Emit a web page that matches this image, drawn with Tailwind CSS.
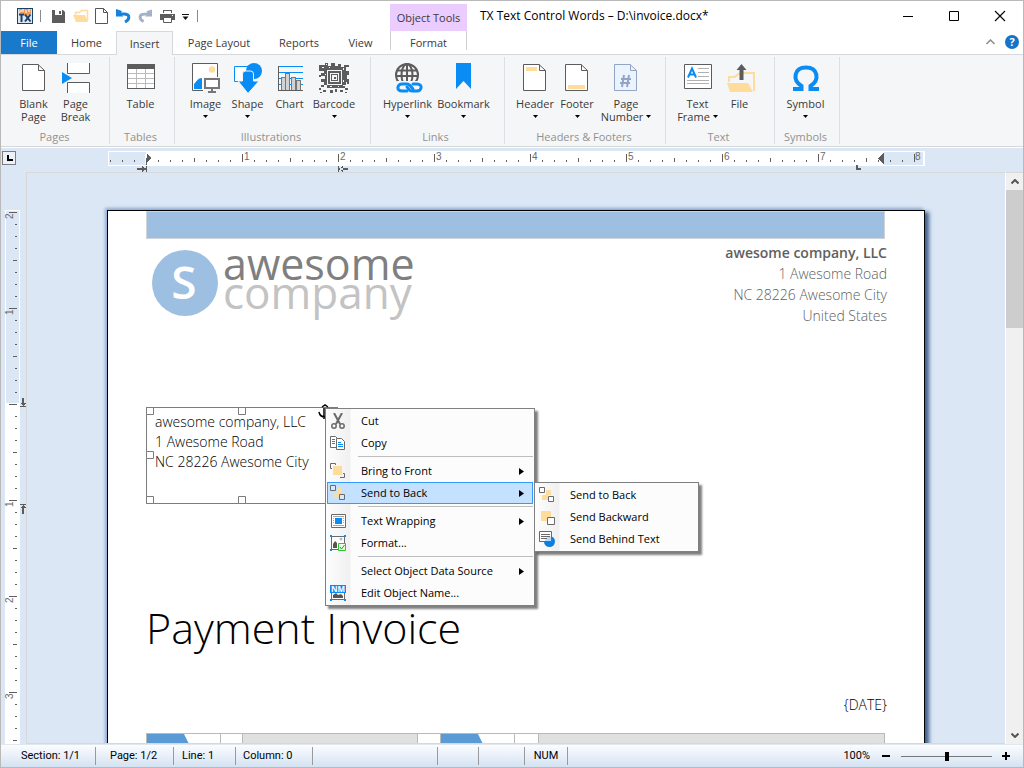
<!DOCTYPE html>
<html lang="en">
<head>
    <meta charset="UTF-8">
    <meta name="viewport" content="width=device-width, initial-scale=1.0">
    <title>TX Text Control Words</title>
    <script src="https://cdn.jsdelivr.net/npm/@tailwindcss/browser@4"></script>
</head>
<body class="h-screen flex flex-col overflow-hidden border border-[#b9b9b9] bg-white font-['Open_Sans',sans-serif] text-[11px] leading-[13px] text-[#3a3a3a]">

<!-- Title bar -->
<header class="flex h-[30px] shrink-0">
    <div class="flex w-[389px] items-center pl-4">
        <svg class="h-4 w-4" viewBox="0 0 16 16">
            <rect width="16" height="16" fill="#17406f"/>
            <rect x="1" y="1" width="14" height="14" fill="#dfe6ee"/>
            <path d="M2 1h12v5l-3 1-1 2-2-1-2-3H3z" fill="#ee9a57"/>
            <path d="M4 2v2M6 1v3M9 2v3M12 1v3" stroke="#fff"/>
            <path d="M2 6.5h5M4.500 6v8M8 6.500l5.500 7M13.500 6.500l-5.500 7" stroke="#17406f" stroke-width="2" fill="none"/>
        </svg>
        <span class="ml-[7px] h-3 w-px bg-[#8a8a8a]"></span>
        <button class="ml-[11px]" aria-label="Save">
            <svg class="h-[13px] w-[13px]" viewBox="0 0 13 13"><path d="M0 0h11l2 2v11H0z" fill="#5c5c5c"/><path d="M3 0h7v5H3z" fill="#fff"/><path d="M7 1h2v3H7zM3 9h7v1H3z" fill="#5c5c5c"/></svg>
        </button>
        <button class="ml-2" aria-label="Open">
            <svg class="h-[14px] w-4" viewBox="0 0 16 14"><path d="M2.500 6V3.500h4l2-2h6v10" fill="none" stroke="#ffdc9b" stroke-width="1.500"/><path d="M0 6h12l3 7H3z" fill="#ffdc9b"/></svg>
        </button>
        <button class="ml-[6px]" aria-label="New">
            <svg class="h-4 w-[13px]" viewBox="0 0 13 16"><path d="M.5.5h8l4 4v11H.5z" fill="#fff" stroke="#555"/><path d="M8.500.5v4h4" fill="none" stroke="#555"/></svg>
        </button>
        <button class="ml-2" aria-label="Undo">
            <svg class="h-[14px] w-[15px]" viewBox="0 0 15 14"><path d="M2 5h6c6.500 0 6 5.500 1 8" fill="none" stroke="#1583dc" stroke-width="3"/><path d="M0 0v7.500h7.500L4.500 4.500 6 2z" fill="#1583dc"/></svg>
        </button>
        <button class="ml-[7px]" aria-label="Redo">
            <svg class="h-[14px] w-[14px]" viewBox="0 0 15 14"><path d="M13 5H7C.5 5 1 10.500 6 13" fill="none" stroke="#a3b2ca" stroke-width="3"/><path d="M15 0v7.500H7.500l3-3L9 2z" fill="#a3b2ca"/></svg>
        </button>
        <button class="ml-2" aria-label="Print">
            <svg class="h-[13px] w-[15px]" viewBox="0 0 15 13"><path d="M3 0h9v3H3zM0 4h15v6h-3V8H3v2H0z" fill="#5c5c5c"/><path d="M3.500 8.500h8v4h-8zM4 1h7v2H4z" fill="#fff"/><path d="M3.500 7.500h8v5h-8z" fill="none" stroke="#5c5c5c"/><path d="M12 5h1v1h-1z" fill="#fff"/></svg>
        </button>
        <button class="ml-[7px]" aria-label="Customize quick access toolbar">
            <svg class="mt-px h-[6px] w-[7px]" viewBox="0 0 7 6"><path d="M0 0h7v1H0zM.5 2.500h6l-3 3.500z" fill="#111"/></svg>
        </button>
        <span class="ml-2 h-3 w-px bg-[#8a8a8a]"></span>
    </div>
    <div class="mt-[3px] flex w-[77px] items-center justify-center bg-[#eaccff]">Object Tools</div>
    <h1 class="ml-[13px] flex-1 pt-2 text-[12px] leading-[14px] text-black">TX Text Control Words – D:\invoice.docx*</h1>
    <div class="flex items-center gap-[34px] pr-[17px] pb-px">
        <button aria-label="Minimize"><svg class="h-3 w-3" viewBox="0 0 12 12"><path d="M1 6h10v1H1z"/></svg></button>
        <button aria-label="Maximize"><svg class="h-3 w-3" viewBox="0 0 12 12"><path d="M1.500 1.500h9v9h-9z" fill="none" stroke="#000"/></svg></button>
        <button aria-label="Close"><svg class="h-3 w-3" viewBox="0 0 12 12"><path d="M1 1l10 10M11 1L1 11" stroke="#000" stroke-width="1.100"/></svg></button>
    </div>
</header>

<!-- Ribbon tabs -->
<nav class="flex h-6 shrink-0 items-stretch border-b border-[#d6d8da]">
    <button class="w-14 bg-[#1979ca] text-white">File</button>
    <button class="w-[59px]">Home</button>
    <button class="-mb-px w-[57px] border border-b-0 border-[#d6d8da] bg-[#f5f6f7]">Insert</button>
    <button class="w-[92px]">Page Layout</button>
    <button class="w-[68px]">Reports</button>
    <button class="mr-[2px] w-[55px]">View</button>
    <button class="mb-1 w-[77px] border-x border-[#d0d0d0] pt-1">Format</button>
    <div class="ml-auto flex items-center gap-[10px] pr-1 pb-px">
        <button aria-label="Collapse ribbon"><svg class="h-[6px] w-[9px]" viewBox="0 0 9 6"><path d="M.5 5l4-4 4 4" fill="none" stroke="#8b8b8b" stroke-width="1.500"/></svg></button>
        <button aria-label="Help" class="h-[14px] w-[14px] rounded-full bg-[#1474c9] text-center text-[11px] leading-[14px] font-bold text-white">?</button>
    </div>
</nav>

<!-- Ribbon -->
<div class="flex h-[92px] shrink-0 border-b border-[#d6d8da] bg-[#f5f6f7] py-[2px]">
    <section class="flex w-[109px] flex-col justify-between border-r border-[#dcdfe1] pt-[5px] pr-px pb-[1px] text-center">
        <div class="flex justify-center">
            <button class="flex w-[42px] flex-col items-center">
                <svg class="mb-[3px] h-8 w-8" viewBox="0 0 32 32"><path d="M4.500 2.500H20l6.500 6v20h-22z" fill="#fff" stroke="#5c5c5c"/><path d="M20.500 2.500v6h6" fill="none" stroke="#5c5c5c"/></svg>
                Blank<br>Page
            </button>
            <button class="flex w-[42px] flex-col items-center">
                <svg class="mb-[3px] h-8 w-8" viewBox="0 0 32 32"><path d="M7.500 1v10.500h22V1M7.500 31V20.500h22V31" fill="#fff" stroke="#5c5c5c"/><path d="M2 10v12l10-6z" fill="#0a8cf5"/></svg>
                Page<br>Break
            </button>
        </div>
        <h2 class="text-[#929292]">Pages</h2>
    </section>
    <section class="flex w-[65px] flex-col justify-between border-r border-[#dcdfe1] pt-[5px] pr-[3px] pb-[1px] text-center">
        <div class="flex justify-center">
            <button class="flex w-[42px] flex-col items-center">
                <svg class="mb-[3px] h-8 w-8" viewBox="0 0 32 32" shape-rendering="crispEdges"><path d="M2.500 2.500h27v24h-27z" fill="#fff"/><path d="M3 11.500h26M3 16.500h26M3 21.500h26M11.500 7v19M20.500 7v19" stroke="#bbb" fill="none"/><path d="M2.500 2.500h27v24h-27z" fill="none" stroke="#5c5c5c"/><path d="M2 2h28v5H2z" fill="#5c5c5c"/></svg>
                Table
            </button>
        </div>
        <h2 class="text-[#929292]">Tables</h2>
    </section>
    <section class="flex w-[196px] flex-col justify-between border-r border-[#dcdfe1] pt-[5px] pr-[3px] pb-[1px] text-center">
        <div class="flex justify-center">
            <button class="flex w-[42px] flex-col items-center">
                <svg class="mb-[3px] h-8 w-8" viewBox="0 0 32 32"><path d="M2.500 1.500h25v27h-25z" fill="#fff" stroke="#5c5c5c"/><circle cx="22" cy="7.500" r="3.200" fill="#ffdc9b"/><path d="M4 27v-5c3-3 4-6 8-6v11z" fill="#0a8cf5"/><path d="M13 15h18v16H13z" fill="#f5f6f7"/><path d="M15 17h14v9H15z" fill="#fff" stroke="#777" stroke-width="2"/><path d="M21 27h2v2h3v2h-8v-2h3z" fill="#777"/></svg>
                Image
                <svg class="mt-[5px] h-[3px] w-[5px]" viewBox="0 0 5 3"><path d="M0 0h5L2.500 3z"/></svg>
            </button>
            <button class="flex w-[42px] flex-col items-center">
                <svg class="mb-[3px] h-8 w-8" viewBox="0 0 32 32"><path d="M2.500 4.500h15v15h-15z" fill="#fff" stroke="#0a8cf5"/><circle cx="22" cy="9" r="8" fill="#0a8cf5"/><path d="M10.500 12q0-3 3-3h5q3 0 3 3v7h5.500L16 31.500 6 19h4.500z" fill="#0a8cf5" stroke="#f5f6f7"/></svg>
                Shape
                <svg class="mt-[5px] h-[3px] w-[5px]" viewBox="0 0 5 3"><path d="M0 0h5L2.500 3z"/></svg>
            </button>
            <button class="flex w-[42px] flex-col items-center">
                <svg class="mb-[3px] h-8 w-8" viewBox="0 0 32 32" shape-rendering="crispEdges"><path d="M4.500 4.500H29M4.500 10.500H29M4.500 16.500H29M4.500 22.500H29" stroke="#0a8cf5" fill="none"/><path d="M7.500 15.500h4v13h-4zM11.500 11.500h4v17h-4zM17.500 15.500h4v13h-4zM22.500 18.500h4v10h-4z" fill="#d2d2d2" stroke="#777"/><path d="M4.500 4v24.500H29" fill="none" stroke="#5c5c5c"/></svg>
                Chart
                <svg class="mt-[5px] h-[3px] w-[5px]" viewBox="0 0 5 3"></svg>
            </button>
            <button class="flex w-[47px] flex-col items-center">
                <svg class="mb-[3px] h-8 w-8" viewBox="0 0 32 32" shape-rendering="crispEdges"><g fill="#5c5c5c"><path d="M1 3h6V1h3v3h3V1h4v3h3V2h3v3h3V3h5v2h-3v4h3v4h-2v4h2v3h-3v3h-3v3H9v-3H6v-3H3v-3h4v-3H3v-3h3V9H1z"/><path d="M1 13h2v2H1zM3 23h3v2H3zM1 26h2v2H1zM5 28h3v2H5zM12 28h3v3h-3zM17 27h2v3h-2zM22 28h3v2h-3zM27 26h3v2h-3zM24 24h3v2h-3zM29 10h2v2h-2zM29 20h2v2h-2zM2 30h2v1H2zM27 30h2v1h-2z"/></g><path d="M9.500 8.500h14v14h-14zM12.500 11.500h8v8h-8z" fill="none" stroke="#f5f6f7"/><path d="M14 13h5v5h-5z" fill="#f5f6f7"/><path d="M15.500 14.500h2v2h-2z" fill="#5c5c5c"/><path d="M8 2h1v1H8zM4 5h2v1H4zM11 5h1v1h-1zM25 6h1v2h-1zM7 12h1v1H7zM25 18h1v2h-1zM12 24h2v1h-2zM20 24h1v1h-1z" fill="#f5f6f7"/></svg>
                Barcode
                <svg class="mt-[5px] h-[3px] w-[5px]" viewBox="0 0 5 3"><path d="M0 0h5L2.500 3z"/></svg>
            </button>
        </div>
        <h2 class="text-[#929292]">Illustrations</h2>
    </section>
    <section class="flex w-[134px] flex-col justify-between border-r border-[#dcdfe1] pt-[5px] pr-1 pb-[1px] text-center">
        <div class="flex justify-center">
            <button class="flex w-14 flex-col items-center">
                <svg class="mb-[3px] h-8 w-8" viewBox="0 0 32 32"><g fill="none" stroke="#5c5c5c" stroke-width="2"><circle cx="15" cy="13" r="11"/><ellipse cx="15" cy="13" rx="5.500" ry="11"/><path d="M15 2v22M5 8.500h20M4 14h22"/></g><path d="M5 19h26v13H5z" fill="#f5f6f7"/><g fill="none" stroke="#0a8cf5" stroke-width="3" stroke-linecap="round"><path d="M15 29h-5c-6 0-5-7 0-7h5c3 0 4 3 6 5"/><path d="M21 22h4c6 0 5 7 0 7h-5c-3 0-3-2-5-4"/></g></svg>
                Hyperlink
                <svg class="mt-[5px] h-[3px] w-[5px]" viewBox="0 0 5 3"><path d="M0 0h5L2.500 3z"/></svg>
            </button>
            <button class="flex w-14 flex-col items-center">
                <svg class="mb-[3px] h-8 w-8" viewBox="0 0 32 32"><path d="M8 1h15v26l-7.500-8L8 27z" fill="#0a8cf5"/></svg>
                Bookmark
                <svg class="mt-[5px] h-[3px] w-[5px]" viewBox="0 0 5 3"><path d="M0 0h5L2.500 3z"/></svg>
            </button>
        </div>
        <h2 class="text-[#929292]">Links</h2>
    </section>
    <section class="flex w-[161px] flex-col justify-between border-r border-[#dcdfe1] pt-[5px] pr-[2px] pb-[1px] text-center">
        <div class="flex justify-center">
            <button class="flex w-[42px] flex-col items-center">
                <svg class="mb-[3px] h-8 w-8" viewBox="0 0 32 32"><path d="M4.500 2.500H20l6.500 6v20h-22z" fill="#fff" stroke="#5c5c5c"/><path d="M20.500 2.500v6h6" fill="none" stroke="#5c5c5c"/><path d="M7 5h11v4H7z" fill="#ffdc9b"/></svg>
                Header
                <svg class="mt-[5px] h-[3px] w-[5px]" viewBox="0 0 5 3"><path d="M0 0h5L2.500 3z"/></svg>
            </button>
            <button class="flex w-[42px] flex-col items-center">
                <svg class="mb-[3px] h-8 w-8" viewBox="0 0 32 32"><path d="M4.500 2.500H20l6.500 6v20h-22z" fill="#fff" stroke="#5c5c5c"/><path d="M20.500 2.500v6h6" fill="none" stroke="#5c5c5c"/><path d="M7 23h17v4H7z" fill="#ffdc9b"/></svg>
                Footer
                <svg class="mt-[5px] h-[3px] w-[5px]" viewBox="0 0 5 3"><path d="M0 0h5L2.500 3z"/></svg>
            </button>
            <button class="flex w-[56px] flex-col items-center">
                <svg class="mb-[3px] h-8 w-8" viewBox="0 0 32 32"><path d="M4.500 2.500H20l6.500 6v20h-22z" fill="#ebf3ff" stroke="#93a5c4"/><path d="M20.500 2.500v6h6" fill="none" stroke="#93a5c4"/><path d="M14 13l-2 12M19 13l-2 12M11 17h10M10 21h10" stroke="#93a5c4" stroke-width="2"/></svg>
                Page
                <span class="flex items-center gap-[3px]">Number <svg class="h-[3px] w-[5px]" viewBox="0 0 5 3"><path d="M0 0h5L2.500 3z"/></svg></span>
            </button>
        </div>
        <h2 class="text-[#929292]">Headers &amp; Footers</h2>
    </section>
    <section class="flex w-[109px] flex-col justify-between border-r border-[#dcdfe1] pt-[5px] pr-[3px] pb-[1px] text-center">
        <div class="flex justify-center">
            <button class="flex w-[42px] flex-col items-center">
                <svg class="mb-[3px] h-8 w-8" viewBox="0 0 32 32"><path d="M2.500 2.500h27v24h-27z" fill="#fff" stroke="#5c5c5c"/><path d="M16 6.500h11M16 10.500h11M16 14.500h11M5 18.500h22M5 21.500h22" stroke="#b0b0b0"/><path d="M6 15.500l4-9 4 9M7.500 12.500h5" fill="none" stroke="#0a8cf5" stroke-width="2"/></svg>
                Text
                <span class="flex items-center gap-[3px]">Frame <svg class="h-[3px] w-[5px]" viewBox="0 0 5 3"><path d="M0 0h5L2.500 3z"/></svg></span>
            </button>
            <button class="flex w-[42px] flex-col items-center">
                <svg class="mb-[3px] h-8 w-8" viewBox="0 0 32 32"><path d="M5 20v-5h6l3-3 3-1h13v18" fill="none" stroke="#ffdc9b" stroke-width="2"/><path d="M3 21h21l5 9H6z" fill="#ffdc9b"/><path d="M17.500 2l-5 6h3v10h4V8h3z" fill="#5c5c5c"/></svg>
                File
            </button>
        </div>
        <h2 class="text-[#929292]">Text</h2>
    </section>
    <section class="flex w-[65px] flex-col justify-between border-r border-[#dcdfe1] pt-[5px] pr-[3px] pb-[1px] text-center">
        <div class="flex justify-center">
            <button class="flex w-[42px] flex-col items-center">
                <svg class="mb-[3px] h-8 w-8" viewBox="0 0 32 32"><path d="M4 27h7.500V24C2 18 4 5.500 16 5.500s14 12.500 4.500 18.500v3H28" fill="none" stroke="#0a8cf5" stroke-width="4"/><path d="M3 25h1v4H3zM28 25h1v4h-1z" fill="#0a8cf5"/></svg>
                Symbol
                <svg class="mt-[5px] h-[3px] w-[5px]" viewBox="0 0 5 3"><path d="M0 0h5L2.500 3z"/></svg>
            </button>
        </div>
        <h2 class="text-[#929292]">Symbols</h2>
    </section>
</div>

<!-- Horizontal ruler -->
<div class="flex h-[25px] shrink-0 items-start border-t border-white bg-[#dbe7f5] pr-[98px]">
    <button aria-label="Tab type" class="mt-[3px] ml-px h-[14px] w-[14px] border border-[#7d7d7d] bg-[#edf2fa]">
        <svg class="h-3 w-3" viewBox="0 0 12 12"><path d="M4 3h2v4h4v2H4z"/></svg>
    </button>
    <svg class="ml-[92px] h-[25px] w-[817px] flex-1 overflow-visible font-['Liberation_Sans',sans-serif] text-[10px]" shape-rendering="crispEdges">
        <defs>
            <pattern id="ticks-x" x="38" y="2" width="96" height="14" patternUnits="userSpaceOnUse">
                <path d="M12.500 10v2M24.500 10v2M36.500 10v2M48.500 8v4M60.500 10v2M72.500 10v2M84.500 10v2M.5 4v8" stroke="#5f5f5f"/>
            </pattern>
        </defs>
        <rect x="0" y="3" width="100%" height="15" fill="#fff"/>
        <rect x="1" y="4" width="37" height="13" fill="#dbe7f5"/>
        <rect x="776" y="4" width="39" height="13" fill="#dbe7f5"/>
        <rect x="0" y="2" width="100%" height="14" fill="url(#ticks-x)"/>
        <rect x="37" y="6" width="3" height="10" fill="#fff"/>
        <g fill="#6a6a6a">
            <text x="136" y="12">1</text><text x="232" y="12">2</text><text x="328" y="12">3</text><text x="424" y="12">4</text>
            <text x="520" y="12">5</text><text x="616" y="12">6</text><text x="712" y="12">7</text><text x="807" y="12">8</text>
        </g>
        <path d="M38 5l5 5-5 5zM38 5v12h1V5zM38 10h5l-5 6zM776 5v11l-6-5.500zM748 17h2v3h3v2h-5zM29 20h9v2h-9zM34 18l4 3-4 3zM38 18h1v6h-1zM230 18h1v6h-1zM231 20h9v2h-9zM235 18l-4 3 4 3z" fill="#5c5c5c"/>
    </svg>
</div>

<!-- Work area -->
<main class="flex min-h-0 flex-1 bg-[#dbe7f5]">
    <svg class="h-full w-[25px] shrink-0 font-['Liberation_Sans',sans-serif] text-[10px]" shape-rendering="crispEdges">
        <defs>
            <pattern id="ticks-y" x="5" y="40" width="12" height="96" patternUnits="userSpaceOnUse">
                <path d="M9 12.500h2M9 24.500h2M9 36.500h2M7 48.500h4M9 60.500h2M9 72.500h2M9 84.500h2M3 .5h8" stroke="#5f5f5f"/>
            </pattern>
        </defs>
        <rect x="4" y="38" width="15" height="100%" fill="#fff"/>
        <rect x="5" y="39" width="13" height="192" fill="#dbe7f5"/>
        <rect x="5" y="39" width="12" height="100%" fill="url(#ticks-y)"/>
        <g fill="#6a6a6a">
            <text transform="translate(12 47) rotate(-90)">2</text><text transform="translate(12 143) rotate(-90)">1</text>
            <text transform="translate(12 335) rotate(-90)">1</text><text transform="translate(12 431) rotate(-90)">2</text>
            <text transform="translate(12 527) rotate(-90)">3</text>
        </g>
        <path d="M19 234h6v1h-6zM21 226h2v5h2l-3 3-3-3h2zM19 332h6v1h-6zM22 333l3 3h-2v6h-2v-6h-2z" fill="#5c5c5c"/>
    </svg>

    <div class="min-w-0 flex-1 overflow-hidden border border-r-0 border-[#d6d8da]">
        <!-- Document page -->
        <article class="relative mx-20 mt-[37px] h-[1056px] border border-black bg-white pr-[39px] pl-[38px] font-light shadow-[-2px_-2px_3px_#8fabd3,4px_2px_4px_#3f5f8d] text-[15px] leading-[21px]">
            <div class="h-7 border border-[#d0d4d8] bg-[#9dbfe2]"></div>
            <div class="flex justify-between text-[14px] text-[#606060]">
                <svg class="h-[84px] w-[280px] overflow-visible" viewBox="0 0 280 84" font-family="'Open Sans', sans-serif">
                    <circle cx="39" cy="44" r="33" fill="#9dbfe2"/>
                    <text x="38" y="60" font-size="46" font-weight="600" fill="#fff" text-anchor="middle">S</text>
                    <text x="77" y="41" font-size="43" font-weight="400" fill="#7f7f7f">awesome</text>
                    <text x="77" y="70" font-size="44" font-weight="400" fill="#c3c3c3">company</text>
                </svg>
                <address class="-mr-[2px] pt-[3px] text-right not-italic">
                    <b class="font-semibold">awesome company, LLC</b><br>1 Awesome Road<br>NC 28226 Awesome City<br>United States
                </address>
            </div>
            <h1 class="mt-[272px] text-[43px] leading-[60px] text-black">Payment Invoice</h1>
            <p class="-mr-[2px] mt-[36px] text-right text-[14px] text-black">{DATE}</p>
            <table class="mt-[18px] h-10 w-full border-collapse">
                <tr>
                    <td class="w-[74px] border border-[#b9b9b9] p-0 align-top"><svg class="block h-10 w-[62px]" viewBox="0 0 62 40"><path d="M0 0h37l20 40H0z" fill="#5b9bd5"/></svg></td>
                    <td class="w-[22px] border border-[#b9b9b9] p-0"></td>
                    <td class="w-[175px] border border-[#b9b9b9] bg-[#e0e0e0] p-0"></td>
                    <td class="w-[23px] border border-[#b9b9b9] p-0"></td>
                    <td class="w-[74px] border border-[#b9b9b9] p-0 align-top"><svg class="block h-10 w-[62px]" viewBox="0 0 62 40"><path d="M0 0h37l20 40H0z" fill="#5b9bd5"/></svg></td>
                    <td class="w-[24px] border border-[#b9b9b9] p-0"></td>
                    <td class="border border-[#b9b9b9] bg-[#e0e0e0] p-0"></td>
                </tr>
            </table>

            <!-- Selected text frame -->
            <div class="absolute top-[196px] left-[38px] h-[97px] w-[192px] border border-[#7c7c7c] bg-white pt-1 pl-2 text-[14px] leading-[20px] text-black">
                awesome company, LLC<br>1 Awesome Road<br>NC 28226 Awesome City
                <svg class="absolute -top-[4px] -left-px h-[100px] w-[192px]" viewBox="0 0 192 100" fill="none">
                    <path d="M.5 3.500h7v7h-7zM92.500 3.500h7v7h-7zM.5 47.500h7v7h-7zM.5 92.500h7v7h-7zM92.500 92.500h7v7h-7z" fill="#fff" stroke="#7c7c7c"/>
                    <path d="M173 8q1 5 6 5M178 4V15M176 3l3-2 3 2" stroke="#000" stroke-width="1.500"/>
                </svg>
            </div>

            <!-- Context menu -->
            <ul class="absolute top-[197px] left-[217px] w-[210px] border border-[#808080] bg-linear-to-r from-[#fcfcfc] from-[2px] via-[#f0f0f0] via-[24px] to-[#fcfcfc] to-[25px] p-px text-[11px] leading-[22px] font-normal text-black shadow-[3px_3px_2px_#00000080]">
                <li><button class="flex h-[22px] w-full items-center pl-[3px]">
                    <svg class="mr-[15px] h-4 w-4" viewBox="0 0 16 16"><g fill="none" stroke="#6a6a6a" stroke-width="2"><path d="M4 0l6 11M12 0L6 11"/><circle cx="4" cy="13" r="2.200" stroke-width="1.500"/><circle cx="12" cy="13" r="2.200" stroke-width="1.500"/></g></svg>
                    Cut
                </button></li>
                <li><button class="flex h-[22px] w-full items-center pl-[3px]">
                    <svg class="mr-[15px] h-4 w-4" viewBox="0 0 16 16"><g fill="#fff" stroke="#6a6a6a"><path d="M.5 1.500h5l3 3v8h-8z"/><path d="M6.500 3.500h5l3 3v8h-8z"/></g><path d="M2 4.500h3M2 6.500h3M2 8.500h3M8 7.500h3M8 9.500h5M8 11.500h5" stroke="#0a8cf5"/></svg>
                    Copy
                </button></li>
                <li class="ml-[31px] h-[6px] pt-[2px]"><hr class="border-[#bdbdbd]"></li>
                <li><button class="flex h-[22px] w-full items-center pl-[3px]">
                    <svg class="mr-[15px] h-4 w-4" viewBox="0 0 16 16"><path d="M3 3h9v9H3z" fill="#ffdc9b"/><path d="M2 5.500H.5v-5h5V2M10 14.500h4.500v-4H13" fill="none" stroke="#6a6a6a"/></svg>
                    Bring to Front
                    <svg class="mr-[9px] ml-auto h-[7px] w-[5px]" viewBox="0 0 5 7"><path d="M0 0l5 3.500L0 7z"/></svg>
                </button></li>
                <li class="relative"><button class="flex h-[22px] w-full items-center border border-[#3399ff] bg-[#c4e1ff] pl-[2px]">
                    <svg class="mr-[15px] h-4 w-4" viewBox="0 0 16 16"><path d="M7 3h5v5h-3v5H3V8h4z" fill="#ffdc9b"/><path d="M.5.5h5v5h-5zM9.500 9.500h5v5h-5z" fill="#d5eaff" stroke="#6a6a6a"/></svg>
                    Send to Back
                    <svg class="mr-2 ml-auto h-[7px] w-[5px]" viewBox="0 0 5 7"><path d="M0 0l5 3.500L0 7z"/></svg>
                </button>
                    <ul class="absolute top-0 left-full ml-px w-[165px] border border-[#808080] bg-linear-to-r from-[#fcfcfc] from-[2px] via-[#f0f0f0] via-[24px] to-[#fcfcfc] to-[25px] p-px shadow-[3px_3px_2px_#00000080]">
                        <li><button class="flex h-[22px] w-full items-center pl-[3px]">
                            <svg class="mr-[15px] h-4 w-4" viewBox="0 0 16 16"><path d="M7 3h5v5h-3v5H3V8h4z" fill="#ffdc9b"/><path d="M.5.5h5v5h-5zM9.500 9.500h5v5h-5z" fill="#fff" stroke="#6a6a6a"/></svg>
                            Send to Back
                        </button></li>
                        <li><button class="flex h-[22px] w-full items-center pl-[3px]">
                            <svg class="mr-[15px] h-4 w-4" viewBox="0 0 16 16"><path d="M2 2h10v10H2z" fill="#ffdc9b"/><path d="M8.500 8.500h7v7h-7z" fill="#fff" stroke="#6a6a6a"/></svg>
                            Send Backward
                        </button></li>
                        <li><button class="flex h-[22px] w-full items-center pl-[3px]">
                            <svg class="mr-[15px] h-4 w-4" viewBox="0 0 16 16"><circle cx="10.500" cy="10.500" r="5.500" fill="#0a7fe0"/><path d="M.5.5h12v10H.5z" fill="#fff" stroke="#6a6a6a"/><path d="M12 5.500a5 5 0 0 0-6 4.500h6z" fill="#b5dafb"/><path d="M2 3.500h9M2 5.500h9M2 7.500h6" stroke="#6a6a6a"/></svg>
                            Send Behind Text
                        </button></li>
                    </ul>
                </li>
                <li class="ml-[31px] h-[6px] pt-[2px]"><hr class="border-[#bdbdbd]"></li>
                <li><button class="flex h-[22px] w-full items-center pl-[3px]">
                    <svg class="mr-[15px] h-4 w-4" viewBox="0 0 16 16"><path d="M1.500 1.500h14v13h-14z" fill="#fff" stroke="#6a6a6a"/><path d="M3 3.500h11M3 12.500h11M3 5.500h1M3 7.500h1M3 9.500h1M13 5.500h1M13 7.500h1M13 9.500h1" stroke="#a5a5a5"/><path d="M5 5h7v6H5z" fill="#0a8cf5"/></svg>
                    Text Wrapping
                    <svg class="mr-[9px] ml-auto h-[7px] w-[5px]" viewBox="0 0 5 7"><path d="M0 0l5 3.500L0 7z"/></svg>
                </button></li>
                <li><button class="flex h-[22px] w-full items-center pl-[3px]">
                    <svg class="mr-[15px] h-4 w-4" viewBox="0 0 16 16"><path d="M1.500 1.500h13v13h-13z" fill="#fff" stroke="#6a6a6a"/><path d="M3 13V9l2-3 2 2v5z" fill="#555"/><circle cx="11" cy="4" r="1.500" fill="#bbb"/><path d="M0 0h2v2H0zM14 0h2v2h-2zM0 14h2v2H0z" fill="#0a8cf5"/><path d="M8.500 8.500h7v7h-7z" fill="#eaffea" stroke="#2fc52f"/><path d="M10 12l1.500 2 3-4" fill="none" stroke="#1fa51f"/></svg>
                    Format...
                </button></li>
                <li class="ml-[31px] h-[6px] pt-[2px]"><hr class="border-[#bdbdbd]"></li>
                <li><button class="flex h-[22px] w-full items-center pl-[34px]">
                    Select Object Data Source
                    <svg class="mr-[9px] ml-auto h-[7px] w-[5px]" viewBox="0 0 5 7"><path d="M0 0l5 3.500L0 7z"/></svg>
                </button></li>
                <li><button class="flex h-[22px] w-full items-center pl-[3px]">
                    <svg class="mr-[15px] h-4 w-4 overflow-visible" viewBox="0 0 16 16"><path d="M1.500 6.500h13v8h-13z" fill="#fff" stroke="#6a6a6a"/><path d="M3 13v-3l3-2 2 2 3-1 2 2v2z" fill="#555"/><path d="M0 0h16v8H0zM0 14h2v2H0zM14 14h2v2h-2z" fill="#0a8cf5"/><text x="8" y="7" font-size="8" font-weight="700" fill="#fff" text-anchor="middle">NM</text></svg>
                    Edit Object Name...
                </button></li>
            </ul>
        </article>
    </div>

    <!-- Vertical scrollbar -->
    <div class="flex w-[18px] shrink-0 flex-col items-stretch border-t border-l border-t-[#d6d8da] border-l-white bg-[#f0f0f0]">
        <button aria-label="Scroll up" class="flex h-[17px] items-center justify-center"><svg class="h-[5px] w-2" viewBox="0 0 8 5"><path d="M.5 4.500L4 1l3.500 3.500" fill="none" stroke="#555" stroke-width="2"/></svg></button>
        <div class="h-[138px] bg-[#cdcdcd]"></div>
        <button aria-label="Scroll down" class="mt-auto flex h-[17px] items-center justify-center"><svg class="h-[5px] w-2" viewBox="0 0 8 5"><path d="M.5.5L4 4 7.500.5" fill="none" stroke="#555" stroke-width="2"/></svg></button>
    </div>
</main>

<!-- Status bar -->
<footer class="flex h-[23px] shrink-0 items-stretch border-t border-[#e3e7ec] bg-linear-to-b from-[#fbfdff] to-[#d5e2f2] py-[2px] font-['Roboto',sans-serif] text-[11px] leading-[18px] text-black">
    <span class="w-[95px] border-r border-[#9a9a9a] pl-5">Section: 1/1</span>
    <span class="w-[78px] border-r border-[#9a9a9a] pl-[14px]">Page: 1/2</span>
    <span class="w-[62px] border-r border-[#9a9a9a] pl-2">Line: 1</span>
    <span class="w-[77px] border-r border-[#9a9a9a] pl-[7px]">Column: 0</span>
    <span class="w-[125px] border-r border-[#9a9a9a]"></span>
    <span class="w-[41px] border-r border-[#9a9a9a]"></span>
    <span class="w-[46px] border-r border-[#9a9a9a]"></span>
    <span class="w-[43px] border-r border-[#9a9a9a] text-center">NUM</span>
    <div class="ml-auto flex items-center pr-3">
        <label for="zoom">100%</label>
        <button aria-label="Zoom out" class="ml-3"><svg class="h-[9px] w-[9px]" viewBox="0 0 9 9"><path d="M0 3h8v2H0z"/></svg></button>
        <input id="zoom" type="range" min="0" max="100" value="50" class="mx-[10px] h-[9px] w-[91px] appearance-none bg-linear-to-b from-transparent from-[4px] via-black via-[4px] to-transparent to-[5px] [&::-webkit-slider-thumb]:h-[9px] [&::-webkit-slider-thumb]:w-1 [&::-webkit-slider-thumb]:appearance-none [&::-webkit-slider-thumb]:bg-black">
        <button aria-label="Zoom in"><svg class="h-[9px] w-[9px]" viewBox="0 0 9 9"><path d="M0 3h3V0h2v3h3v2H5v3H3V5H0z"/></svg></button>
    </div>
</footer>
</body>
</html>
